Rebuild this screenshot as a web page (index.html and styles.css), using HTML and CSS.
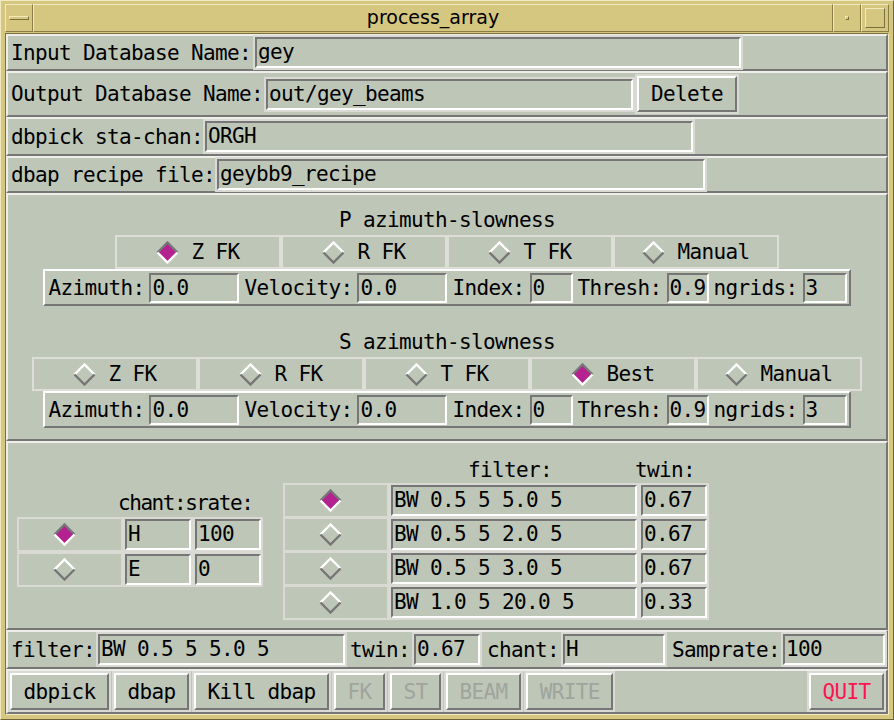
FILE: index.html
```html
<!DOCTYPE html>
<html>
<head>
<meta charset="utf-8">
<title>process_array</title>
<link rel="stylesheet" href="styles.css">
</head>
<body>
<div class="window">
  <div class="titlebar">
    <div class="tb-btn"><span class="menu-bar"></span></div>
    <div class="tb-title">process_array</div>
    <div class="tb-btn"><span class="min-dot"></span></div>
    <div class="tb-btn"><span class="max-box"></span></div>
  </div>
  <div class="client">
    <div class="row r1"><span class="lbl">Input Database Name:</span><div class="fld ring f-in">gey</div></div>
    <div class="row r2"><span class="lbl">Output Database Name:</span><div class="fld ring f-out">out/gey_beams</div><button class="btn ring b-del">Delete</button></div>
    <div class="row r3"><span class="lbl">dbpick sta-chan:</span><div class="fld ring f-sc">ORGH</div></div>
    <div class="row r4"><span class="lbl">dbap recipe file:</span><div class="fld ring f-sc">geybb9_recipe</div></div>

    <div class="row r5">
      <div class="sec-title">P azimuth-slowness</div>
      <div class="rgroup">
        <div class="rcell"><svg class="dia on" width="23" height="23" viewBox="0 0 23 23"><polygon class="df" points="11.5,1.5 21.5,11.5 11.5,21.5 1.5,11.5"/><polyline class="dt" points="1.5,11.5 11.5,1.5 21.5,11.5"/><polyline class="db" points="1.5,11.5 11.5,21.5 21.5,11.5"/></svg><span>Z FK</span></div>
        <div class="rcell"><svg class="dia" width="23" height="23" viewBox="0 0 23 23"><polygon class="df" points="11.5,1.5 21.5,11.5 11.5,21.5 1.5,11.5"/><polyline class="dt" points="1.5,11.5 11.5,1.5 21.5,11.5"/><polyline class="db" points="1.5,11.5 11.5,21.5 21.5,11.5"/></svg><span>R FK</span></div>
        <div class="rcell"><svg class="dia" width="23" height="23" viewBox="0 0 23 23"><polygon class="df" points="11.5,1.5 21.5,11.5 11.5,21.5 1.5,11.5"/><polyline class="dt" points="1.5,11.5 11.5,1.5 21.5,11.5"/><polyline class="db" points="1.5,11.5 11.5,21.5 21.5,11.5"/></svg><span>T FK</span></div>
        <div class="rcell"><svg class="dia" width="23" height="23" viewBox="0 0 23 23"><polygon class="df" points="11.5,1.5 21.5,11.5 11.5,21.5 1.5,11.5"/><polyline class="dt" points="1.5,11.5 11.5,1.5 21.5,11.5"/><polyline class="db" points="1.5,11.5 11.5,21.5 21.5,11.5"/></svg><span>Manual</span></div>
      </div>
      <div class="pframe">
        <span class="lbl">Azimuth:</span><div class="fld pf w90">0.0</div>
        <span class="lbl">Velocity:</span><div class="fld pf w90">0.0</div>
        <span class="lbl">Index:</span><div class="fld pf w43">0</div>
        <span class="lbl">Thresh:</span><div class="fld pf w42">0.9</div>
        <span class="lbl">ngrids:</span><div class="fld pf w44">3</div>
      </div>

      <div class="sec-title s2">S azimuth-slowness</div>
      <div class="rgroup">
        <div class="rcell"><svg class="dia" width="23" height="23" viewBox="0 0 23 23"><polygon class="df" points="11.5,1.5 21.5,11.5 11.5,21.5 1.5,11.5"/><polyline class="dt" points="1.5,11.5 11.5,1.5 21.5,11.5"/><polyline class="db" points="1.5,11.5 11.5,21.5 21.5,11.5"/></svg><span>Z FK</span></div>
        <div class="rcell"><svg class="dia" width="23" height="23" viewBox="0 0 23 23"><polygon class="df" points="11.5,1.5 21.5,11.5 11.5,21.5 1.5,11.5"/><polyline class="dt" points="1.5,11.5 11.5,1.5 21.5,11.5"/><polyline class="db" points="1.5,11.5 11.5,21.5 21.5,11.5"/></svg><span>R FK</span></div>
        <div class="rcell"><svg class="dia" width="23" height="23" viewBox="0 0 23 23"><polygon class="df" points="11.5,1.5 21.5,11.5 11.5,21.5 1.5,11.5"/><polyline class="dt" points="1.5,11.5 11.5,1.5 21.5,11.5"/><polyline class="db" points="1.5,11.5 11.5,21.5 21.5,11.5"/></svg><span>T FK</span></div>
        <div class="rcell"><svg class="dia on" width="23" height="23" viewBox="0 0 23 23"><polygon class="df" points="11.5,1.5 21.5,11.5 11.5,21.5 1.5,11.5"/><polyline class="dt" points="1.5,11.5 11.5,1.5 21.5,11.5"/><polyline class="db" points="1.5,11.5 11.5,21.5 21.5,11.5"/></svg><span>Best</span></div>
        <div class="rcell"><svg class="dia" width="23" height="23" viewBox="0 0 23 23"><polygon class="df" points="11.5,1.5 21.5,11.5 11.5,21.5 1.5,11.5"/><polyline class="dt" points="1.5,11.5 11.5,1.5 21.5,11.5"/><polyline class="db" points="1.5,11.5 11.5,21.5 21.5,11.5"/></svg><span>Manual</span></div>
      </div>
      <div class="pframe">
        <span class="lbl">Azimuth:</span><div class="fld pf w90">0.0</div>
        <span class="lbl">Velocity:</span><div class="fld pf w90">0.0</div>
        <span class="lbl">Index:</span><div class="fld pf w43">0</div>
        <span class="lbl">Thresh:</span><div class="fld pf w42">0.9</div>
        <span class="lbl">ngrids:</span><div class="fld pf w44">3</div>
      </div>
    </div>

    <div class="row r6">
      <div class="grp">
        <div class="ghead chant-head"><span class="h-chant">chant:</span><span class="h-srate">srate:</span></div>
        <div class="tbl chant-tbl">
          <div class="tcell"><svg class="dia on" width="23" height="23" viewBox="0 0 23 23"><polygon class="df" points="11.5,1.5 21.5,11.5 11.5,21.5 1.5,11.5"/><polyline class="dt" points="1.5,11.5 11.5,1.5 21.5,11.5"/><polyline class="db" points="1.5,11.5 11.5,21.5 21.5,11.5"/></svg></div>
          <div class="fld tf">H</div>
          <div class="fld tf">100</div>
          <div class="tcell"><svg class="dia" width="23" height="23" viewBox="0 0 23 23"><polygon class="df" points="11.5,1.5 21.5,11.5 11.5,21.5 1.5,11.5"/><polyline class="dt" points="1.5,11.5 11.5,1.5 21.5,11.5"/><polyline class="db" points="1.5,11.5 11.5,21.5 21.5,11.5"/></svg></div>
          <div class="fld tf">E</div>
          <div class="fld tf">0</div>
        </div>
      </div>
      <div class="grp filt-grp">
        <div class="ghead filt-head"><span class="h-filter">filter:</span><span class="h-twin">twin:</span></div>
        <div class="tbl filt-tbl">
          <div class="tcell"><svg class="dia on" width="23" height="23" viewBox="0 0 23 23"><polygon class="df" points="11.5,1.5 21.5,11.5 11.5,21.5 1.5,11.5"/><polyline class="dt" points="1.5,11.5 11.5,1.5 21.5,11.5"/><polyline class="db" points="1.5,11.5 11.5,21.5 21.5,11.5"/></svg></div>
          <div class="fld tf">BW 0.5 5 5.0 5</div>
          <div class="fld tf">0.67</div>
          <div class="tcell"><svg class="dia" width="23" height="23" viewBox="0 0 23 23"><polygon class="df" points="11.5,1.5 21.5,11.5 11.5,21.5 1.5,11.5"/><polyline class="dt" points="1.5,11.5 11.5,1.5 21.5,11.5"/><polyline class="db" points="1.5,11.5 11.5,21.5 21.5,11.5"/></svg></div>
          <div class="fld tf">BW 0.5 5 2.0 5</div>
          <div class="fld tf">0.67</div>
          <div class="tcell"><svg class="dia" width="23" height="23" viewBox="0 0 23 23"><polygon class="df" points="11.5,1.5 21.5,11.5 11.5,21.5 1.5,11.5"/><polyline class="dt" points="1.5,11.5 11.5,1.5 21.5,11.5"/><polyline class="db" points="1.5,11.5 11.5,21.5 21.5,11.5"/></svg></div>
          <div class="fld tf">BW 0.5 5 3.0 5</div>
          <div class="fld tf">0.67</div>
          <div class="tcell"><svg class="dia" width="23" height="23" viewBox="0 0 23 23"><polygon class="df" points="11.5,1.5 21.5,11.5 11.5,21.5 1.5,11.5"/><polyline class="dt" points="1.5,11.5 11.5,1.5 21.5,11.5"/><polyline class="db" points="1.5,11.5 11.5,21.5 21.5,11.5"/></svg></div>
          <div class="fld tf">BW 1.0 5 20.0 5</div>
          <div class="fld tf">0.33</div>
        </div>
      </div>
    </div>

    <div class="row r7">
      <span class="lbl">filter:</span><div class="fld ring r7-filter">BW 0.5 5 5.0 5</div>
      <span class="lbl r7-l">twin:</span><div class="fld ring r7-twin">0.67</div>
      <span class="lbl r7-l2">chant:</span><div class="fld ring r7-chant">H</div>
      <span class="lbl r7-l2">Samprate:</span><div class="fld ring r7-samp">100</div>
    </div>

    <div class="row r8">
      <button class="btn ring first">dbpick</button>
      <button class="btn ring">dbap</button>
      <button class="btn ring">Kill dbap</button>
      <button class="btn ring dis">FK</button>
      <button class="btn ring dis">ST</button>
      <button class="btn ring dis">BEAM</button>
      <button class="btn ring dis">WRITE</button>
      <button class="btn ring quit">QUIT</button>
    </div>
  </div>
</div>
</body>
</html>
```

FILE: styles.css
```css
* { box-sizing: border-box; }
html, body { margin: 0; padding: 0; }
body {
  width: 894px;
  height: 720px;
  overflow: hidden;
  background: #d5c680;
  font-family: "DejaVu Sans Mono", "Liberation Mono", monospace;
  font-size: 21px;
  letter-spacing: -0.64px;
  color: #000;
}

/* ---------- window frame ---------- */
.window {
  width: 894px;
  height: 720px;
  background: #d5c680;
  border: 1px solid;
  border-color: #f1e9c0 #6e6436 #6e6436 #f1e9c0;
  padding: 3px 4px 4px 4px;
  display: flex;
  flex-direction: column;
}
.titlebar {
  height: 28px;
  flex: none;
  display: flex;
  margin-bottom: 1px;
}
.tb-btn {
  width: 28px;
  flex: none;
  border: 1px solid;
  border-color: #f1e9c0 #8a7d45 #8a7d45 #f1e9c0;
  display: flex;
  align-items: center;
  justify-content: center;
}
.tb-title {
  flex: 1;
  border: 1px solid;
  border-color: #f1e9c0 #8a7d45 #8a7d45 #f1e9c0;
  font-family: "DejaVu Sans", "Liberation Sans", sans-serif;
  font-size: 19px;
  letter-spacing: 0;
  line-height: 25px;
  text-align: center;
  color: #000;
}
.menu-bar {
  width: 20px;
  height: 4px;
  border: 1px solid;
  border-color: #f1e9c0 #7a6e3a #7a6e3a #f1e9c0;
}
.min-dot {
  width: 4px;
  height: 4px;
  border: 1px solid;
  border-color: #f1e9c0 #7a6e3a #7a6e3a #f1e9c0;
}
.max-box {
  width: 20px;
  height: 20px;
  border: 1px solid;
  border-color: #f1e9c0 #7a6e3a #7a6e3a #f1e9c0;
}
.client {
  flex: 1;
  border: 1px solid;
  border-color: #7a6e3a #f1e9c0 #f1e9c0 #7a6e3a;
  background: #bec6b8;
  display: flex;
  flex-direction: column;
}

/* ---------- rows ---------- */
.row {
  flex: none;
  display: flex;
  align-items: center;
  border: 2px solid;
  border-color: #eeeeea #767676 #767676 #eeeeea;
  padding-left: 3px;
}
.r1 { height: 37px; }
.r2 { height: 46px; }
.r3 { height: 39px; }
.r4 { height: 37px; }
.r5 { height: 248px; flex-direction: column; align-items: center; padding: 0; }
.r6 { height: 189px; padding: 7px 0 0 9px; }
.r7 { height: 39px; }
.r8 { height: 45px; padding-left: 1px; }

.lbl {
  white-space: pre;
  line-height: 24px;
  flex: none;
}

/* ---------- text fields ---------- */
.fld {
  flex: none;
  height: 31px;
  border: 2px solid;
  border-color: #767676 #ffffff #ffffff #767676;
  padding-left: 1px;
  line-height: 26px;
  white-space: pre;
  overflow: hidden;
  background: #bec6b8;
}
.ring { box-shadow: 0 0 0 2px #d8dad3; }
.f-in { width: 486px; margin-left: 4px; }
.f-out { width: 367px; margin-left: 3px; }
.f-sc { width: 488px; margin-left: 2px; }

/* ---------- buttons ---------- */
.btn {
  flex: none;
  height: 37px;
  border: 2px solid;
  border-color: #ffffff #767676 #767676 #ffffff;
  background: #bec6b8;
  font: inherit;
  letter-spacing: inherit;
  color: #000;
  padding: 0 11.5px;
  line-height: 30px;
  margin: 0 0 0 5px;
}
.b-del { width: 100px; height: 36px; margin-left: 4px; }
.btn.first { margin-left: 1px; }
.btn.dis { color: #9fa49c; }
.btn.quit { color: #ff1450; margin-left: auto; margin-right: 2px; }

/* ---------- azimuth-slowness section ---------- */
.sec-title {
  line-height: 24px;
  margin-top: 13px;
  white-space: pre;
}
.sec-title.s2 { margin-top: 24px; }
.rgroup {
  display: flex;
  margin-top: 3px;
}
.rcell {
  width: 166px;
  height: 34px;
  border: 2px solid #dcded7;
  display: flex;
  align-items: center;
  justify-content: center;
  white-space: pre;
}
.dia { flex: none; margin-right: 12px; display: block; }
.dia .df { fill: none; }
.dia .dt { fill: none; stroke: #ffffff; stroke-width: 2.4; }
.dia .db { fill: none; stroke: #767676; stroke-width: 2.4; }
.dia.on .df { fill: #b3228e; }
.dia.on .dt { stroke: #767676; }
.dia.on .db { stroke: #ffffff; }

.pframe {
  display: flex;
  align-items: center;
  height: 37px;
  border: 2px solid;
  border-color: #ffffff #767676 #767676 #ffffff;
  padding: 0 2px 0 3px;
}
.pframe .lbl { margin-left: 5px; }
.pframe .lbl:first-child { margin-left: 0; }
.fld.pf { height: 30px; margin-left: 5px; }
.w90 { width: 90px; }
.w43 { width: 43px; }
.w42 { width: 42px; }
.w44 { width: 44px; }

/* ---------- tables ---------- */
.grp { display: flex; flex-direction: column; }
.ghead { display: flex; line-height: 24px; white-space: pre; }
.chant-head { margin-bottom: 2px; letter-spacing: -1.45px; }
.h-chant { margin-left: 101px; }
.h-srate { margin-left: 0; }
.filt-grp { margin-left: 20px; }
.filt-head { margin-bottom: 1px; }
.h-filter { margin-left: 185px; }
.h-twin { margin-left: 83px; }

.tbl {
  display: grid;
  background: #d8dad3;
  padding: 2px;
}
.chant-tbl {
  grid-template-columns: 102px 66px 66px;
  grid-auto-rows: 31px;
  gap: 4px 4px;
}
.filt-tbl {
  grid-template-columns: 102px 246px 66px;
  grid-auto-rows: 31px;
  gap: 3px 4px;
}
.tcell {
  background: #bec6b8;
  display: flex;
  align-items: center;
  justify-content: center;
}
.fld.tf { height: 31px; }

/* ---------- bottom filter row ---------- */
.r7-filter { width: 247px; margin-left: 3px; }
.r7-l { margin-left: 5px; }
.r7-twin { width: 66px; margin-left: 4px; }
.r7-l2 { margin-left: 7px; }
.r7-chant { width: 102px; margin-left: 4px; }
.r7-samp { width: 102px; margin-left: 3px; }
```
